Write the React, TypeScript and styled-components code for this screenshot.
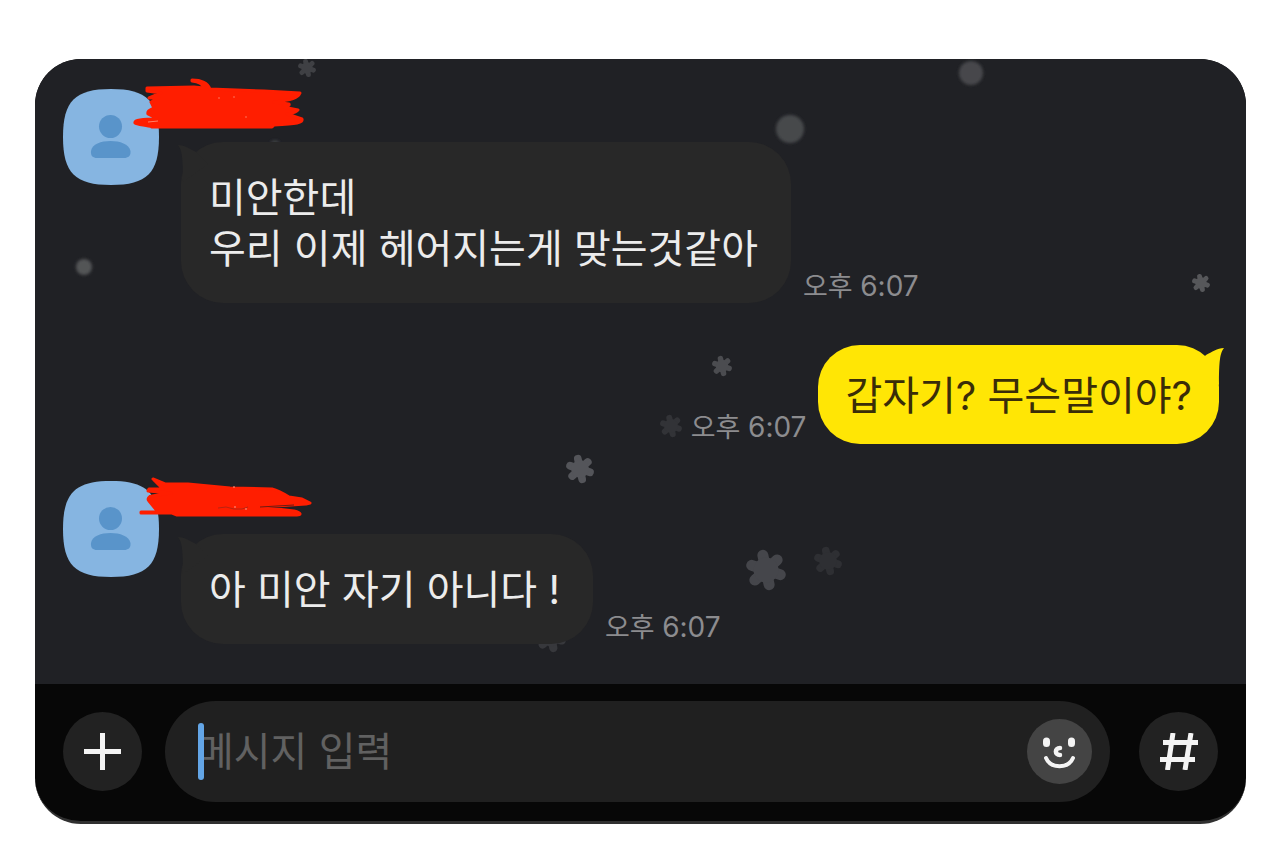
import React from "react";
import styled, { createGlobalStyle } from "styled-components";

const GlobalStyle = createGlobalStyle`
  * { box-sizing: border-box; }
  body {
    margin: 0;
    background: #ffffff;
    font-family: Inter, "Noto Sans CJK KR", sans-serif;
  }
`;

const Page = styled.main`
  padding: 59px 34px 20px 35px;
`;

const Card = styled.section`
  overflow: hidden;
  border-radius: 46px;
  border-bottom: 3px solid #303030;
  background: #070707;
`;

const Chat = styled.div`
  position: relative;
  background: #202125;
  padding: 30px 27px 40px 28px;
`;

const SnowLayer = styled.svg`
  position: absolute;
  inset: 0;
  width: 100%;
  height: 100%;
`;

const Messages = styled.ol`
  position: relative;
  list-style: none;
  margin: 0;
  padding: 0;
  display: flex;
  flex-direction: column;
`;

const IncomingItem = styled.li`
  display: flex;
  align-items: flex-start;
  gap: 22px;
  & + li { margin-top: 42px; }
`;

const OutgoingItem = styled.li`
  display: flex;
  justify-content: flex-end;
  align-items: flex-end;
  gap: 12px;
  & + li { margin-top: 37px; }
`;

const Avatar = styled.svg`
  flex: none;
  width: 96px;
  height: 96px;
`;

const Body = styled.div`
  display: flex;
  flex-direction: column;
`;

const Name = styled.div`
  position: relative;
  height: 53px;
`;

const Scribble = styled.svg`
  position: absolute;
  left: -47px;
  top: -11px;
  width: 180px;
  height: 56px;
  overflow: visible;
`;

const BubbleRow = styled.div`
  display: flex;
  align-items: flex-end;
  gap: 12px;
`;

const Bubble = styled.p<{ $mine?: boolean }>`
  position: relative;
  margin: 0;
  padding: ${(p) => (p.$mine ? "25px 27px 23px" : "30px 33px 29px 28px")};
  border-radius: 42px;
  background: ${(p) => (p.$mine ? "#ffe605" : "#282828")};
  color: ${(p) => (p.$mine ? "#3a2d08" : "#ececec")};
  font-size: 40px;
  line-height: 51px;
  white-space: pre-line;
`;

const Tail = styled.svg<{ $mine?: boolean }>`
  position: absolute;
  top: 2px;
  ${(p) => (p.$mine ? "right: -5px;" : "left: -3px; transform: scaleX(-1);")}
  width: 30px;
  height: 40px;
  fill: ${(p) => (p.$mine ? "#ffe605" : "#282828")};
`;

const Time = styled.time`
  color: #8c8c8f;
  font-size: 27px;
  line-height: 32px;
  white-space: nowrap;
`;

const Clock = styled.span`
  font-size: 28px;
`;

const Composer = styled.form`
  display: flex;
  align-items: center;
  padding: 17px 28px 19px;
`;

const RoundButton = styled.button`
  flex: none;
  width: 79px;
  height: 79px;
  padding: 0;
  border: 0;
  border-radius: 50%;
  background: #222222;
  display: grid;
  place-items: center;
`;

const Field = styled.div`
  position: relative;
  flex: 1;
  min-width: 0;
  height: 101px;
  margin: 0 29px 0 23px;
  padding: 0 18px 0 32px;
  border-radius: 51px;
  background: #202020;
  display: flex;
  align-items: center;
`;

const TextBox = styled.input`
  flex: 1;
  min-width: 0;
  height: 60px;
  padding: 0;
  border: 0;
  outline: 0;
  background: transparent;
  color: #ececec;
  font-family: inherit;
  font-size: 40px;
  line-height: 51px;
  &::placeholder { color: #616161; opacity: 1; }
`;

const Caret = styled.span`
  position: absolute;
  left: 33px;
  top: 22px;
  width: 6px;
  height: 57px;
  border-radius: 3px;
  background: #63a5e6;
`;

const EmojiButton = styled(RoundButton)`
  width: 65px;
  height: 65px;
  background: #444444;
`;

type FlakeData = { x: number; y: number; r: number; color: string };

const flakes: FlakeData[] = [
  { x: 272, y: 10, r: 9, color: "#3f4044" },
  { x: 687, y: 308, r: 10, color: "#4b4c50" },
  { x: 636, y: 368, r: 11, color: "#323337" },
  { x: 545, y: 411, r: 14, color: "#54555a" },
  { x: 731, y: 512, r: 20, color: "#45464b" },
  { x: 793, y: 503, r: 14, color: "#2e2f33" },
  { x: 1166, y: 225, r: 9, color: "#56575a" },
  { x: 516, y: 579, r: 15, color: "#37383c" },
];

const dots = [
  { x: 936, y: 15, r: 12, color: "#46474b" },
  { x: 755, y: 71, r: 14, color: "#47484c" },
  { x: 49, y: 209, r: 8, color: "#535457" },
  { x: 240, y: 87, r: 5, color: "#3b3c40" },
];

function Snow() {
  return (
    <SnowLayer viewBox="0 1 1211 625" preserveAspectRatio="xMidYMid slice" aria-hidden="true">
      <defs>
        <filter id="soft" x="-50%" y="-50%" width="200%" height="200%">
          <feGaussianBlur stdDeviation="1.5" />
        </filter>
      </defs>
      {flakes.map((f) => (
        <g
          key={`${f.x}-${f.y}`}
          transform={`translate(${f.x} ${f.y}) rotate(-12) scale(${f.r / 20})`}
          stroke={f.color}
          strokeWidth="11"
          strokeLinecap="round"
        >
          <path d="M0-15V15M-13-7.5L13 7.5M-13 7.5L13-7.5" />
          <circle r="12.500" fill={f.color} stroke="none" />
        </g>
      ))}
      {dots.map((d) => (
        <circle key={`${d.x}-${d.y}`} cx={d.x} cy={d.y} r={d.r} fill={d.color} filter="url(#soft)" />
      ))}
    </SnowLayer>
  );
}

function Profile() {
  return (
    <Avatar viewBox="0 0 96 96" role="img" aria-label="프로필">
      <path fill="#86b5e1" d="M48 0C84 0 96 12 96 48S84 96 48 96 0 84 0 48 12 0 48 0Z" />
      <circle cx="47.500" cy="37.500" r="11.500" fill="#5994ca" />
      <path
        fill="#5994ca"
        d="M28 62C29 55 38 52 47.500 52S66 55 67.500 62C68 67 65 69 61 69H34C30 69 27.500 67 28 62Z"
      />
    </Avatar>
  );
}

function ScribbleOne() {
  return (
    <Scribble viewBox="0 0 180 56" aria-hidden="true">
      <path
        fill="#ff1e00"
        stroke="#ff1e00"
        strokeWidth="3"
        strokeLinejoin="round"
        d="M13 10L60 9 70 10C69 6 66 4 58 3L58 2C66 2 73 4 76 11L130 13 166 15C164 20 158 22 140 24L155 26C156 28 152 28 149 29L164 32C162 35 158 35 153 36L168 41C169 45 163 46 140 47L138 49H18C13 47 3 47 1 45 0 42 8 41 24 41L14 36C13 33 16 32 20 30L17 24 25 20 15 20 27 15 13 13Z"
      />
      <path d="M14 44L24 43" stroke="#ff8068" strokeWidth="1" />
      <path d="M84 20h2M99 19h2M111 39h2" stroke="#ff7058" strokeWidth="1" />
    </Scribble>
  );
}

function ScribbleTwo() {
  return (
    <Scribble viewBox="0 0 180 56" aria-hidden="true">
      <g transform="translate(0 4)">
        <path
          fill="#ff1e00"
          stroke="#ff1e00"
          strokeWidth="3"
          strokeLinejoin="round"
          d="M19 5L31 10 54 10 96 14 138 15C145 17 150 20 155 23L168 25 176 29 172 30 126 33 160 37C168 39 167 41 163 41H43L38 39H7V38H24L15 27C13 25 15 22 18 22L37 19 14 17 15 15 29 15Z"
        />
        <path d="M126 33L160 31" stroke="#6b1b12" strokeWidth="1" />
        <path d="M84 34L92 33 100 35 108 35 114 33" fill="none" stroke="#b82412" strokeWidth="1" />
        <path d="M99 13h2M100 33h2M111 35h2" stroke="#ff9a86" strokeWidth="1" />
      </g>
    </Scribble>
  );
}

function BubbleTail({ mine }: { mine?: boolean }) {
  return (
    <Tail $mine={mine} viewBox="0 0 30 40" aria-hidden="true">
      <path d="M30 1C26 6 25 14 25 38L0 20 12 8C18 5 23 1 30 1Z" />
    </Tail>
  );
}

function SentAt() {
  return (
    <Time dateTime="18:07">
      오후 <Clock>6:07</Clock>
    </Time>
  );
}

function Incoming({ text, name }: { text: string; name: React.ReactNode }) {
  return (
    <IncomingItem>
      <Profile />
      <Body>
        <Name>{name}</Name>
        <BubbleRow>
          <Bubble>
            <BubbleTail />
            {text}
          </Bubble>
          <SentAt />
        </BubbleRow>
      </Body>
    </IncomingItem>
  );
}

function Outgoing({ text }: { text: string }) {
  return (
    <OutgoingItem>
      <SentAt />
      <Bubble $mine>
        <BubbleTail mine />
        {text}
      </Bubble>
    </OutgoingItem>
  );
}

export default function App() {
  return (
    <>
      <GlobalStyle />
      <Page>
        <Card>
          <Chat>
            <Snow />
            <Messages>
              <Incoming text={"미안한데\n우리 이제 헤어지는게 맞는것같아"} name={<ScribbleOne />} />
              <Outgoing text="갑자기? 무슨말이야?" />
              <Incoming text="아 미안 자기 아니다 !" name={<ScribbleTwo />} />
            </Messages>
          </Chat>
          <Composer onSubmit={(e) => e.preventDefault()}>
            <RoundButton type="button" aria-label="추가">
              <svg width="37" height="37" viewBox="0 0 37 37" stroke="#f4f4f4" strokeWidth="5">
                <path d="M18.500 0V37M0 18.500H37" />
              </svg>
            </RoundButton>
            <Field>
              <TextBox type="text" aria-label="메시지 입력" placeholder="메시지 입력" />
              <Caret />
              <EmojiButton type="button" aria-label="이모티콘">
                <svg width="65" height="65" viewBox="0 0 65 65" fill="none" stroke="#f4f4f4" strokeLinecap="round">
                  <path d="M19.500 22V24.500M44.500 22V24.500" strokeWidth="7" />
                  <path d="M33 29C27.500 29 27.500 36 33 36" strokeWidth="4.500" />
                  <path d="M19 39C24 50 41 50 46 39" strokeWidth="4" />
                </svg>
              </EmojiButton>
            </Field>
            <RoundButton type="button" aria-label="샵검색">
              <svg width="38" height="37" viewBox="0 0 38 37" stroke="#f4f4f4" strokeWidth="5">
                <path d="M13 0L7.500 37M31 0L25 37M3 9.500H38M0 26.500H35" />
              </svg>
            </RoundButton>
          </Composer>
        </Card>
      </Page>
    </>
  );
}
